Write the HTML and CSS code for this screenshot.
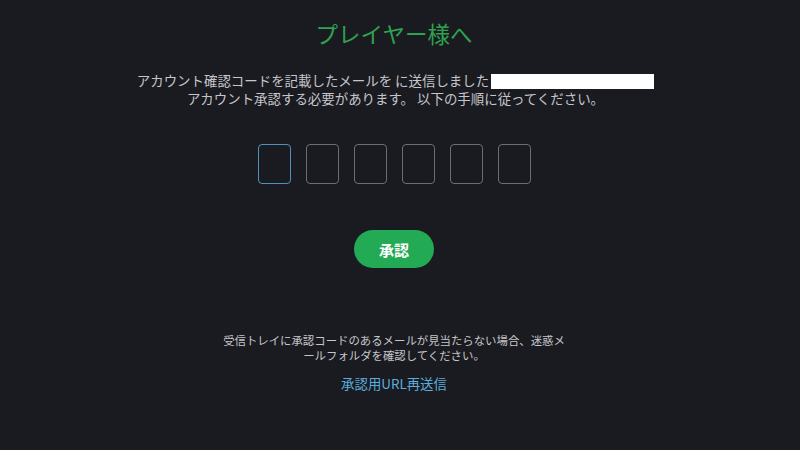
FILE: index.html
```html
<!DOCTYPE html>
<html lang="ja">
<head>
<meta charset="utf-8">
<title>承認</title>
<link rel="stylesheet" href="styles.css">
</head>
<body>
<main class="page">
  <h1 class="title">プレイヤー様へ</h1>
  <p class="intro">アカウント確認コードを記載したメールを に送信しました<span class="email"></span><br>アカウント承認する必要があります。 以下の手順に従ってください。</p>
  <div class="code">
    <input class="digit active" type="text" maxlength="1">
    <input class="digit" type="text" maxlength="1">
    <input class="digit" type="text" maxlength="1">
    <input class="digit" type="text" maxlength="1">
    <input class="digit" type="text" maxlength="1">
    <input class="digit" type="text" maxlength="1">
  </div>
  <button class="confirm" type="button">承認</button>
  <p class="note">受信トレイに承認コードのあるメールが見当たらない場合、迷惑メールフォルダを確認してください。</p>
  <a class="resend" href="#">承認用URL再送信</a>
</main>
</body>
</html>
```

FILE: styles.css
```css
html, body {
  margin: 0;
  padding: 0;
  background: #1a1b21;
  height: 100%;
}
body {
  font-family: "Noto Sans CJK JP", "Noto Sans", sans-serif;
  color: #c6c6c9;
}
.page {
  display: flex;
  flex-direction: column;
  align-items: center;
  padding-top: 18px;
  padding-right: 12px;
}
.title {
  margin: 0;
  font-size: 22.5px;
  line-height: 30px;
  font-weight: 400;
  color: #2ea24f;
}
.intro {
  margin: 23px 0 0;
  font-size: 13.45px;
  line-height: 18px;
  text-align: center;
  padding-left: 3px;
}
.email {
  display: inline-block;
  width: 163px;
  height: 15px;
  margin-left: 2px;
  background: #ffffff;
  vertical-align: -3px;
}
.code {
  margin-top: 37px;
  display: flex;
  gap: 15px;
}
.digit {
  box-sizing: border-box;
  width: 33px;
  height: 40px;
  margin: 0;
  padding: 0;
  border: 1.3px solid #6e6e72;
  border-radius: 4px;
  background: transparent;
  outline: none;
}
.digit.active {
  border-color: #4f93bd;
}
.confirm {
  margin-top: 46px;
  width: 80px;
  height: 38px;
  border: none;
  border-radius: 19px;
  background: #22aa55;
  color: #ffffff;
  font-family: "Noto Sans CJK JP", sans-serif;
  font-size: 15px;
  font-weight: 700;
  padding: 0;
}
.note {
  margin: 65px 0 0;
  width: 350px;
  font-size: 11.4px;
  line-height: 14.5px;
  text-align: center;
}
.resend {
  margin-top: 12px;
  font-size: 13.4px;
  line-height: 18px;
  color: #5aaddc;
  text-decoration: none;
}
```
